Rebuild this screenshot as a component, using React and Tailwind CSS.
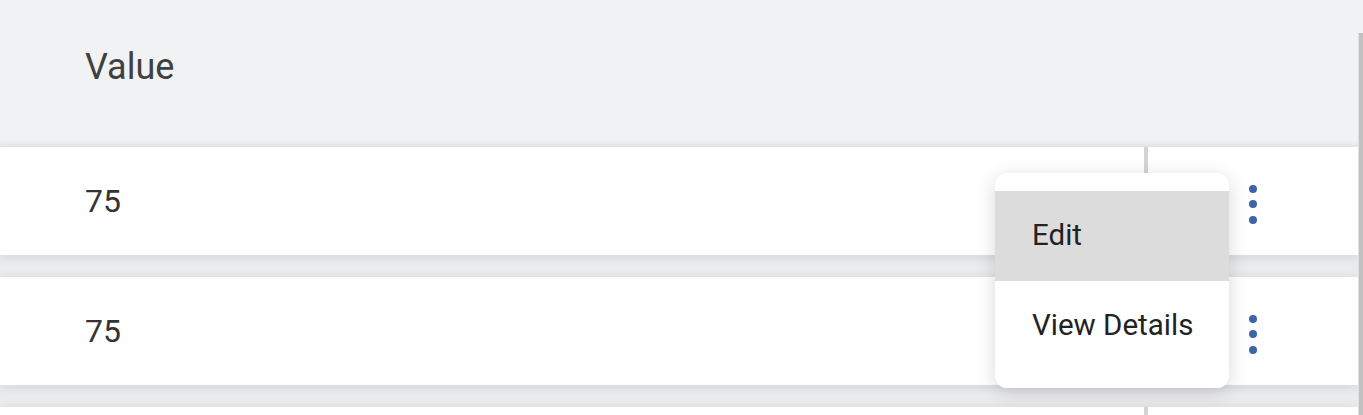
import React from 'react';

const rows = [{ value: 75 }, { value: 75 }, { value: null }];

function Kebab() {
  return (
    <div className="mt-[6px] flex flex-col items-center gap-[7.5px]">
      <span className="block h-[8px] w-[8px] rounded-full bg-[#3d64a7]" />
      <span className="block h-[8px] w-[8px] rounded-full bg-[#3d64a7]" />
      <span className="block h-[8px] w-[8px] rounded-full bg-[#3d64a7]" />
    </div>
  );
}

export default function App() {
  return (
    <div className="relative flex h-[415px] w-[1363px] overflow-hidden bg-[#eaebed] font-['Roboto',_'Liberation_Sans',_sans-serif]">
      <div className="flex w-[1358px] flex-col">
        {/* Header */}
        <div className="h-[147px] shrink-0 bg-[#f1f2f4] pl-[85px] pt-[49px] shadow-[inset_0_-10px_10px_-8px_rgba(0,0,0,0.05)]">
          <span className="text-[36px] leading-[36px] text-[#404040]">Value</span>
        </div>

        {/* Rows */}
        <div className="flex flex-col gap-[22px]">
          {rows.map((row, i) => (
            <div
              key={i}
              className="flex h-[108px] shrink-0 bg-white shadow-[0_2px_10px_rgba(0,0,0,0.1)]"
            >
              <div className="flex w-[1144px] items-center pl-[85px]">
                {row.value !== null && (
                  <span className="text-[32px] leading-none text-[#333]">{row.value}</span>
                )}
              </div>
              <div className="w-[4px] bg-[#d4d4d4]" />
              <div className="flex w-[209px] items-center justify-center">
                {row.value !== null && <Kebab />}
              </div>
            </div>
          ))}
        </div>
      </div>

      {/* Scrollbar */}
      <div className="flex w-[5px] flex-col">
        <div className="h-[33px] bg-[#f1f2f4]" />
        <div className="flex-1 border-l border-[#e0e0e0] bg-[#c1c1c1]" />
      </div>

      {/* Action menu */}
      <div className="absolute left-[995px] top-[173px] w-[234px] rounded-[12px] bg-white py-[18px] shadow-[0_4px_20px_rgba(0,0,0,0.15)]">
        <div className="flex h-[90px] items-center bg-[#dcdcdc] pl-[37px] text-[29.5px] leading-none text-[#222]">
          Edit
        </div>
        <div className="flex h-[89px] items-center pl-[37px] text-[29.5px] leading-none text-[#222]">
          View Details
        </div>
      </div>
    </div>
  );
}
